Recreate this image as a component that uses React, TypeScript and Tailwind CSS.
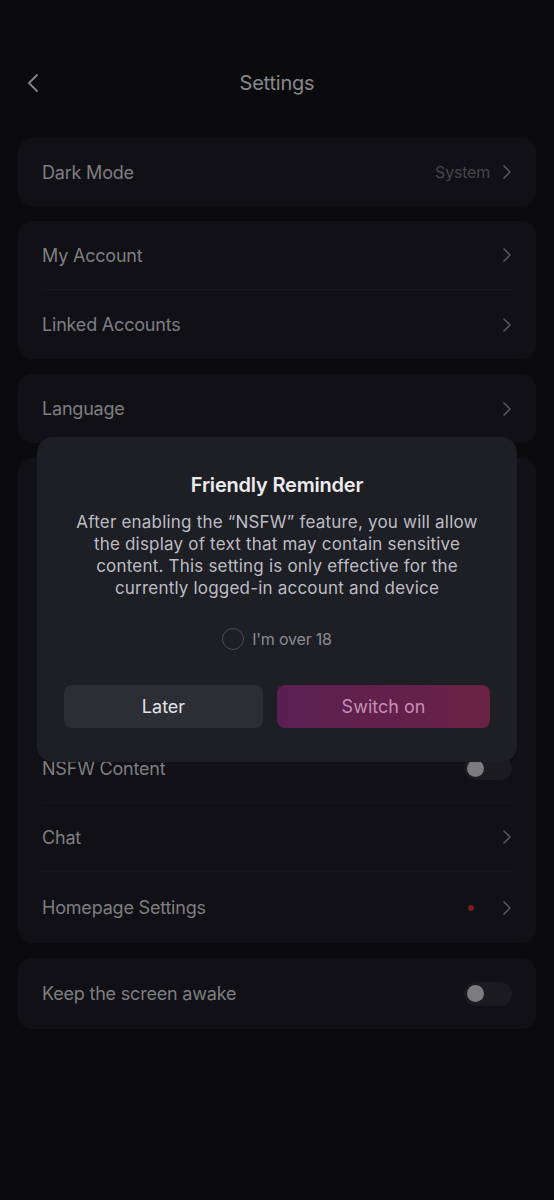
const FONT = { fontFamily: 'Inter, "Noto Sans", sans-serif' };

function Chevron({ className = "" }: { className?: string }) {
  return (
    <svg width="10" height="16" viewBox="0 0 10 16" fill="none" className={className}>
      <path d="M2 2l6 6-6 6" stroke="currentColor" strokeWidth="1.6" strokeLinecap="round" strokeLinejoin="round" />
    </svg>
  );
}

function Toggle() {
  return (
    <div className="flex h-[24px] w-[48px] items-center rounded-full bg-[#1a1a1f] px-[3px]">
      <div className="h-[17px] w-[17px] rounded-full bg-[#7c7c7e]" />
    </div>
  );
}

function Row({
  label, right, h = "h-[69px]",
}: {
  label?: string;
  right?: React.ReactNode;
  h?: string;
}) {
  return (
    <div className={`flex ${h} items-center justify-between px-[24px]`}>
      <span className="text-[18px] tracking-[-0.2px] text-[#7e7e82]">{label}</span>
      <div className="flex items-center">{right}</div>
    </div>
  );
}

const arrow = <Chevron className="text-[#55555a]" />;

export default function App() {
  return (
    <div className="relative min-h-[1200px] w-full bg-[#0b0b0e] pt-[60px]" style={FONT}>
      <div className="relative flex h-[46px] items-center justify-center">
        <svg width="14" height="20" viewBox="0 0 14 20" fill="none" className="absolute left-[26px] text-[#85858a]">
          <path d="M11 2L3 10l8 8" stroke="currentColor" strokeWidth="1.8" strokeLinecap="round" strokeLinejoin="round" />
        </svg>
        <span className="text-[20px] tracking-[-0.2px] text-[#88888c]">Settings</span>
      </div>

      <div className="mx-[18px] mt-[32px] flex flex-col gap-[15px]">
        <div className="rounded-[14px] bg-[#111115]">
          <Row
            label="Dark Mode"
            h="h-[68px]"
            right={<><span className="mr-[12px] text-[16px] tracking-[-0.2px] text-[#46464b]">System</span>{arrow}</>}
          />
        </div>

        <div className="rounded-[14px] bg-[#111115]">
          <div className="mx-[24px] flex h-[69px] items-center justify-between border-b border-[#16161b]">
            <span className="text-[18px] tracking-[-0.2px] text-[#7e7e82]">My Account</span>
            {arrow}
          </div>
          <Row label="Linked Accounts" right={arrow} />
        </div>

        <div className="rounded-[14px] bg-[#111115]">
          <Row label="Language" right={arrow} />
        </div>

        <div className="rounded-[14px] bg-[#111115]">
          <div className="h-[69px]" />
          <div className="h-[69px]" />
          <div className="h-[69px]" />
          <div className="h-[69px]" />
          <div className="mx-[24px] flex h-[69px] items-center justify-between border-b border-[#15151a]">
            <span className="text-[18px] tracking-[-0.2px] text-[#7e7e82]">NSFW Content</span>
            <Toggle />
          </div>
          <div className="mx-[24px] flex h-[69px] items-center justify-between border-b border-[#15151a]">
            <span className="text-[18px] tracking-[-0.2px] text-[#7e7e82]">Chat</span>
            {arrow}
          </div>
          <div className="mx-[24px] flex h-[71px] items-center justify-between">
            <span className="text-[18px] tracking-[-0.2px] text-[#7e7e82]">Homepage Settings</span>
            <div className="flex items-center">
              <div className="mr-[28px] h-[6px] w-[6px] rounded-full bg-[#7a1c1f]" />
              {arrow}
            </div>
          </div>
        </div>

        <div className="rounded-[14px] bg-[#111115]">
          <Row label="Keep the screen awake" h="h-[71px]" right={<Toggle />} />
        </div>
      </div>

      <div className="absolute left-[37px] top-[437px] flex h-[325px] w-[480px] flex-col items-center rounded-[16px] bg-[#1e1e25] px-[30px]">
        <div className="mt-[33px] text-[20px] font-semibold tracking-[-0.2px] text-[#ececef]">Friendly Reminder</div>
        <p className="mt-[11px] text-center text-[17px] leading-[22px] tracking-[0.2px] text-[#bdbdc3]">
          After enabling the “NSFW” feature, you will allow the display of text that may contain sensitive content. This setting is only effective for the currently logged-in account and device
        </p>
        <div className="mt-[28px] flex items-center">
          <div className="h-[22px] w-[22px] rounded-full border-[1.5px] border-[#4b4b52]" />
          <span className="ml-[8px] text-[16px] tracking-[-0.2px] text-[#8c8c92]">I'm over 18</span>
        </div>
        <div className="mt-[34px] flex w-full gap-[14px] px-[-3px]">
          <button className="-ml-[3px] h-[43px] w-[199px] rounded-[8px] bg-[#2d2d35] text-[18px] text-[#e2e2e5]">Later</button>
          <button className="-mr-[3px] h-[43px] flex-1 rounded-[8px] bg-gradient-to-r from-[#5a1f52] to-[#6a2243] text-[18px] text-[#c590b6]">Switch on</button>
        </div>
      </div>
    </div>
  );
}
